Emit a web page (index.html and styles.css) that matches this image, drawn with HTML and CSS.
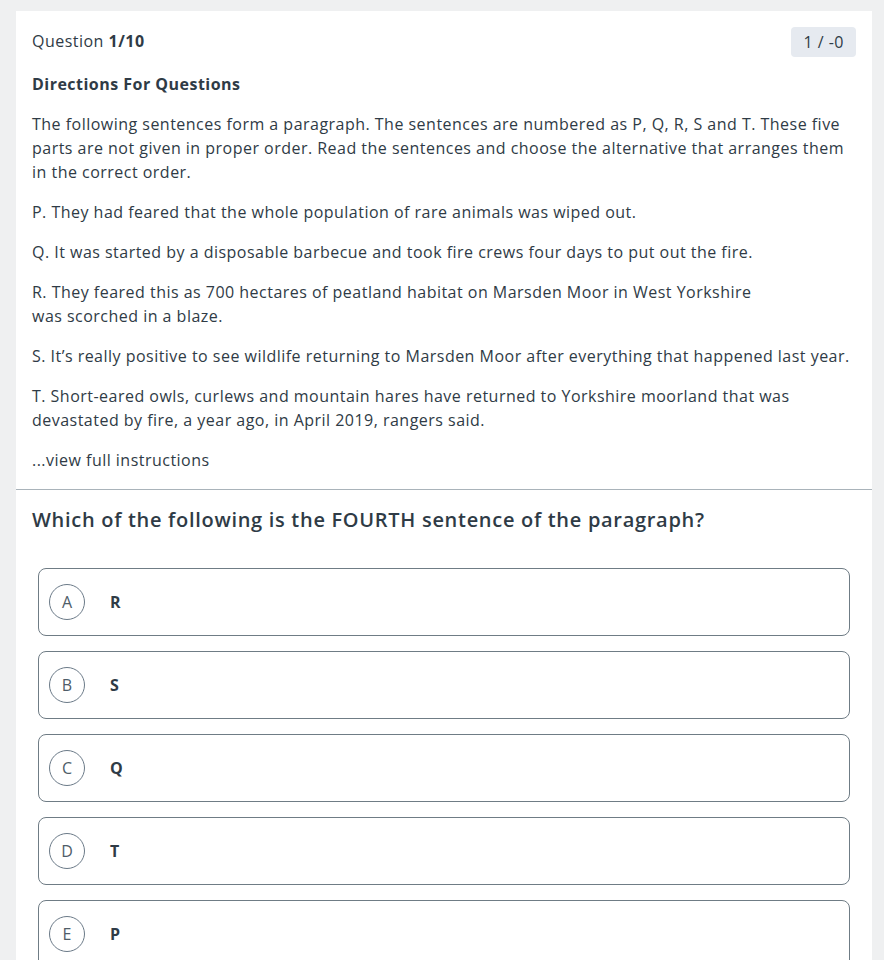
FILE: index.html
```html
<!DOCTYPE html>
<html lang="en">
<head>
<meta charset="utf-8">
<title>Question 1/10</title>
<link rel="stylesheet" href="styles.css">
</head>
<body>
<main class="card">
  <section class="directions">
    <header class="q-head">
      <div class="q-count">Question <strong>1/10</strong></div>
      <div class="marks">1 / -0</div>
    </header>
    <h2 class="dir-title">Directions For Questions</h2>
    <p>The following sentences form a paragraph. The sentences are numbered as P, Q, R, S and T. These five parts are not given in proper order. Read the sentences and choose the alternative that arranges them in the correct order.</p>
    <p>P. They had feared that the whole population of rare animals was wiped out.</p>
    <p>Q. It was started by a disposable barbecue and took fire crews four days to put out the fire.</p>
    <p>R. They feared this as 700 hectares of peatland habitat on Marsden Moor in West Yorkshire<br>was scorched in a blaze.</p>
    <p>S. It’s really positive to see wildlife returning to Marsden Moor after everything that happened last year.</p>
    <p>T. Short-eared owls, curlews and mountain hares have returned to Yorkshire moorland that was devastated by fire, a year ago, in April 2019, rangers said.</p>
    <p class="more">...view full instructions</p>
  </section>
  <section class="question">
    <h1 class="q-text">Which of the following is the FOURTH sentence of the paragraph?</h1>
    <ul class="options">
      <li class="option"><span class="opt-letter">A</span><span class="opt-text">R</span></li>
      <li class="option"><span class="opt-letter">B</span><span class="opt-text">S</span></li>
      <li class="option"><span class="opt-letter">C</span><span class="opt-text">Q</span></li>
      <li class="option"><span class="opt-letter">D</span><span class="opt-text">T</span></li>
      <li class="option"><span class="opt-letter">E</span><span class="opt-text">P</span></li>
    </ul>
  </section>
</main>
</body>
</html>
```

FILE: styles.css
```css
* { box-sizing: border-box; }
html, body { margin: 0; padding: 0; }
body {
  background: #eff0f1;
  font-family: "Open Sans", "DejaVu Sans", sans-serif;
  color: #2f3b46;
  letter-spacing: 0.48px;
  padding: 11px 12px 0 16px;
}
.card {
  background: #ffffff;
  width: 856px;
  min-height: 960px;
}
.directions {
  padding: 16px 16px 17px;
  border-bottom: 1px solid #a9b3ba;
}
.q-head {
  display: flex;
  justify-content: space-between;
  align-items: center;
  height: 30px;
  margin-bottom: 15px;
}
.q-count { font-size: 16px; line-height: 24px; margin-top: -2px; }
.q-count strong { font-weight: 700; }
.marks {
  background: #e6eaf0;
  border-radius: 4px;
  padding: 0 12px;
  height: 30px;
  line-height: 30px;
  font-size: 16px;
}
.dir-title {
  font-size: 16px;
  font-weight: 700;
  margin: 0 0 16px;
  line-height: 24px;
}
.directions p {
  margin: 0 0 16px;
  font-size: 16px;
  line-height: 24px;
}
.directions p.more { margin-bottom: 0; }
.question { padding: 16px 16px 0; }
.q-text {
  margin: 0 0 34px;
  font-size: 20px;
  font-weight: 600;
  letter-spacing: 0.7px;
  line-height: 28px;
}
.options {
  list-style: none;
  margin: 0 6px;
  padding: 0;
  display: flex;
  flex-direction: column;
  gap: 15px;
}
.option {
  display: flex;
  align-items: center;
  height: 68px;
  border: 1px solid #6f7c85;
  border-radius: 8px;
  padding: 0 10px;
}
.opt-letter {
  width: 36px;
  height: 36px;
  border: 1px solid #6b7a88;
  border-radius: 50%;
  display: flex;
  align-items: center;
  justify-content: center;
  font-size: 16px;
  color: #4f5d69;
  margin-right: 25px;
  letter-spacing: 0;
}
.opt-text {
  font-size: 16px;
  font-weight: 700;
}
```
